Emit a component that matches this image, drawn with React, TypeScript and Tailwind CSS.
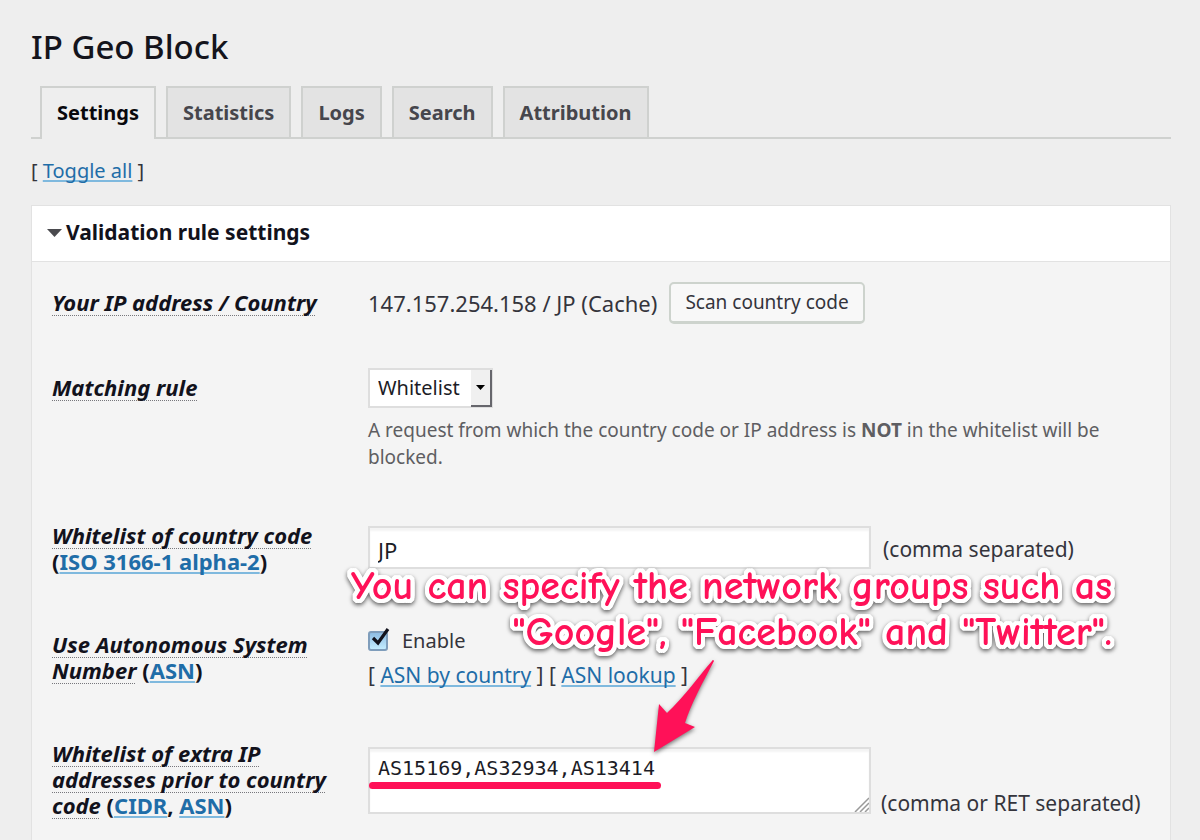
import type { ReactNode } from "react";

const tabs = ["Settings", "Statistics", "Logs", "Search", "Attribution"];

function Link({ children }: { children: ReactNode }) {
  return (
    <a
      href="#"
      className="text-[#1f6da8] underline decoration-[#7fb9de] decoration-2 underline-offset-2 [text-decoration-skip-ink:none]"
    >
      {children}
    </a>
  );
}

function Term({ children }: { children: ReactNode }) {
  return (
    <dfn className="underline decoration-[#77777c] decoration-dotted decoration-[1px] underline-offset-4 [text-decoration-skip-ink:none]">
      {children}
    </dfn>
  );
}

function Row({ className, label, children }: { className: string; label: ReactNode; children: ReactNode }) {
  return (
    <div className={`grid grid-cols-[316px_1fr] ${className}`}>
      <div className="pt-[19px] pr-8 text-[22px] leading-[26px] font-bold text-[#12121c]">{label}</div>
      <div>{children}</div>
    </div>
  );
}

function Callout() {
  return (
    <p className="pointer-events-none absolute top-[301px] right-[58px] text-right text-[40px] leading-[46px] font-bold whitespace-nowrap text-[#ff1158] [font-family:'Comic_Neue','Noto_Sans',sans-serif] [font-variant-ligatures:none] [text-shadow:4px_0_white,-4px_0_white,0_4px_white,0_-4px_white,3px_3px_white,-3px_3px_white,3px_-3px_white,-3px_-3px_white,4px_2px_white,-4px_2px_white,4px_-2px_white,-4px_-2px_white,2px_4px_white,-2px_4px_white,2px_-4px_white,-2px_-4px_white] drop-shadow-[0_2px_2px_rgba(0,0,0,0.6)]">
      You can specify the network groups such as
      <br />
      "Google", "Facebook" and "Twitter".
    </p>
  );
}

export default function App() {
  return (
    <div className="min-h-screen overflow-hidden bg-[#eeeeee] pr-[29px] pl-[31px] text-xl text-[#34343c] [font-family:'Noto_Sans',sans-serif]">
      <h1 className="pt-6 text-[33px] leading-[46px] font-medium text-[#14141c]">IP Geo Block</h1>

      <nav className="mt-4 flex gap-[10px] border-b-2 border-[#cfd1cf] pl-[9px]">
        {tabs.map((tab, i) => (
          <a
            key={tab}
            href="#"
            className={
              i === 0
                ? "-mb-[2px] border-2 border-b-0 border-[#cfd1cf] bg-[#eeeeee] px-[15px] pt-3 pb-[13px] leading-[26px] font-bold text-[#08080c]"
                : "border-2 border-b-0 border-[#cfd1cf] bg-[#e3e3e3] px-[15px] pt-3 pb-[11px] leading-[26px] font-bold text-[#46464c]"
            }
          >
            {tab}
          </a>
        ))}
      </nav>

      <p className="mt-[18px] leading-7">
        [ <Link>Toggle all</Link> ]
      </p>

      <section className="mt-5 border border-[#e2e2e2] bg-[#f4f4f4]">
        <h2 className="border-b border-[#e2e2e2] bg-white">
          <button type="button" className="flex w-full items-center gap-1 px-[15px] pt-[13px] pb-[15px] text-left text-[21px] leading-[27px] font-bold text-[#12121c]">
            <svg width="15" height="8" viewBox="0 0 15 8" aria-hidden="true">
              <path d="M0 0H15L7.5 8Z" fill="#4a4a4e" />
            </svg>
            Validation rule settings
          </button>
        </h2>

        <form className="relative pt-2 pl-5" onSubmit={(e) => e.preventDefault()}>
          <Row className="min-h-[85px]" label={<Term>Your IP address / Country</Term>}>
            <div className="flex items-center gap-3 pt-3">
              <span className="text-[22px] leading-6">147.157.254.158 / JP (Cache)</span>
              <button
                type="button"
                className="h-[42px] rounded-[5px] border-2 border-b-[3px] border-[#cdd3cd] bg-[#f8f8f8] px-[14px] text-[19px] whitespace-nowrap"
              >
                Scan country code
              </button>
            </div>
          </Row>

          <Row className="min-h-[148px]" label={<label htmlFor="rule"><Term>Matching rule</Term></label>}>
            <div className="pt-[13px]">
              <div className="relative w-[125px]">
                <select id="rule" className="block h-10 w-full appearance-none border-2 border-[#dedede] bg-white px-2 text-[#1c1c26]">
                  <option>Whitelist</option>
                  <option>Blacklist</option>
                </select>
                <span className="pointer-events-none absolute top-[2px] right-px bottom-px flex w-[21px] items-center justify-center border-r-2 border-b-2 border-[#66666c] bg-[#f0f0f0]">
                  <svg width="9" height="5" viewBox="0 0 9 5" aria-hidden="true">
                    <path d="M0 0H9L4.5 5Z" fill="#000" />
                  </svg>
                </span>
              </div>
              <p className="mt-[9px] pr-9 text-[19px] leading-[27px] text-[#5e5e62]">
                A request from which the country code or IP address is <b>NOT</b> in the whitelist will be blocked.
              </p>
            </div>
          </Row>

          <Row
            className="min-h-[109px]"
            label={
              <>
                <label htmlFor="codes"><Term>Whitelist of country code</Term></label> (<Link>ISO 3166-1 alpha-2</Link>)
              </>
            }
          >
            <div className="flex items-center gap-3 pt-[23px] text-[21px]">
              <input
                id="codes"
                type="text"
                defaultValue="JP"
                className="h-[43px] w-[503px] border-2 border-[#dedede] bg-white px-2 pt-1 text-[22px] text-[#1c1c26] shadow-[inset_0_3px_2px_#f4f4f4]"
              />
              <span className="pt-1">(comma separated)</span>
            </div>
          </Row>

          <Row
            className="min-h-[109px]"
            label={
              <>
                <Term>Use Autonomous System Number</Term> (<Link>ASN</Link>)
              </>
            }
          >
            <div className="pt-[13px] text-[21px]">
              <label className="flex w-fit items-center gap-[14px] text-xl leading-8">
                <span className="relative block size-5">
                  <input
                    type="checkbox"
                    defaultChecked
                    className="peer block size-5 appearance-none rounded-[3px] border-2 border-[#7f9dbb] bg-linear-to-b from-[#8fbde3] to-[#c3ecff]"
                  />
                  <svg className="pointer-events-none absolute -top-[3px] left-[3px] hidden peer-checked:block" width="19" height="20" viewBox="0 0 19 20" aria-hidden="true">
                    <path d="M2 10L7 15L17 1" fill="none" stroke="#12121c" strokeWidth="3.2" />
                  </svg>
                </span>
                Enable
              </label>
              <p className="mt-[2px] leading-8">
                [ <Link>ASN by country</Link> ] [ <Link>ASN lookup</Link> ]
              </p>
            </div>
          </Row>

          <Row
            className="min-h-[109px]"
            label={
              <>
                <label htmlFor="extra"><Term>Whitelist of extra IP addresses prior to country code</Term></label> (<Link>CIDR</Link>, <Link>ASN</Link>)
              </>
            }
          >
            <div className="relative flex items-end gap-[10px] pt-[26px] text-[21px]">
              <textarea
                id="extra"
                defaultValue="AS15169,AS32934,AS13414"
                className="block h-[67px] w-[503px] resize-none border-2 border-[#dedede] bg-white px-2 pt-[5px] text-xl leading-7 text-[#1c1c26] [font-family:'DejaVu_Sans_Mono',monospace] shadow-[inset_0_3px_2px_#f4f4f4]"
              />
              <svg className="pointer-events-none absolute bottom-[2px] left-[486px]" width="15" height="15" viewBox="0 0 15 15" aria-hidden="true">
                <path d="M1 15L15 1M6 15L15 6M11 15L15 11" fill="none" stroke="#9a9a9a" strokeWidth="1.5" />
              </svg>
              <span className="-mb-1">(comma or RET separated)</span>
              <span className="pointer-events-none absolute top-[61px] left-px h-[7px] w-[292px] rounded-full bg-[#ff1158]" />
              <svg
                className="pointer-events-none absolute -top-[61px] left-[285px] drop-shadow-[0_2px_2px_rgba(0,0,0,0.5)]"
                width="64"
                height="94"
                viewBox="0 0 64 94"
                aria-hidden="true"
              >
                <path d="M59 1Q60 -1 61 1C50 22 38 44 32 63L42 67L1 92L6 44L14 53C32 36 46 16 59 1Z" fill="#ff1158" />
              </svg>
            </div>
          </Row>

          <div className="h-6" />
          <Callout />
        </form>
      </section>
    </div>
  );
}
